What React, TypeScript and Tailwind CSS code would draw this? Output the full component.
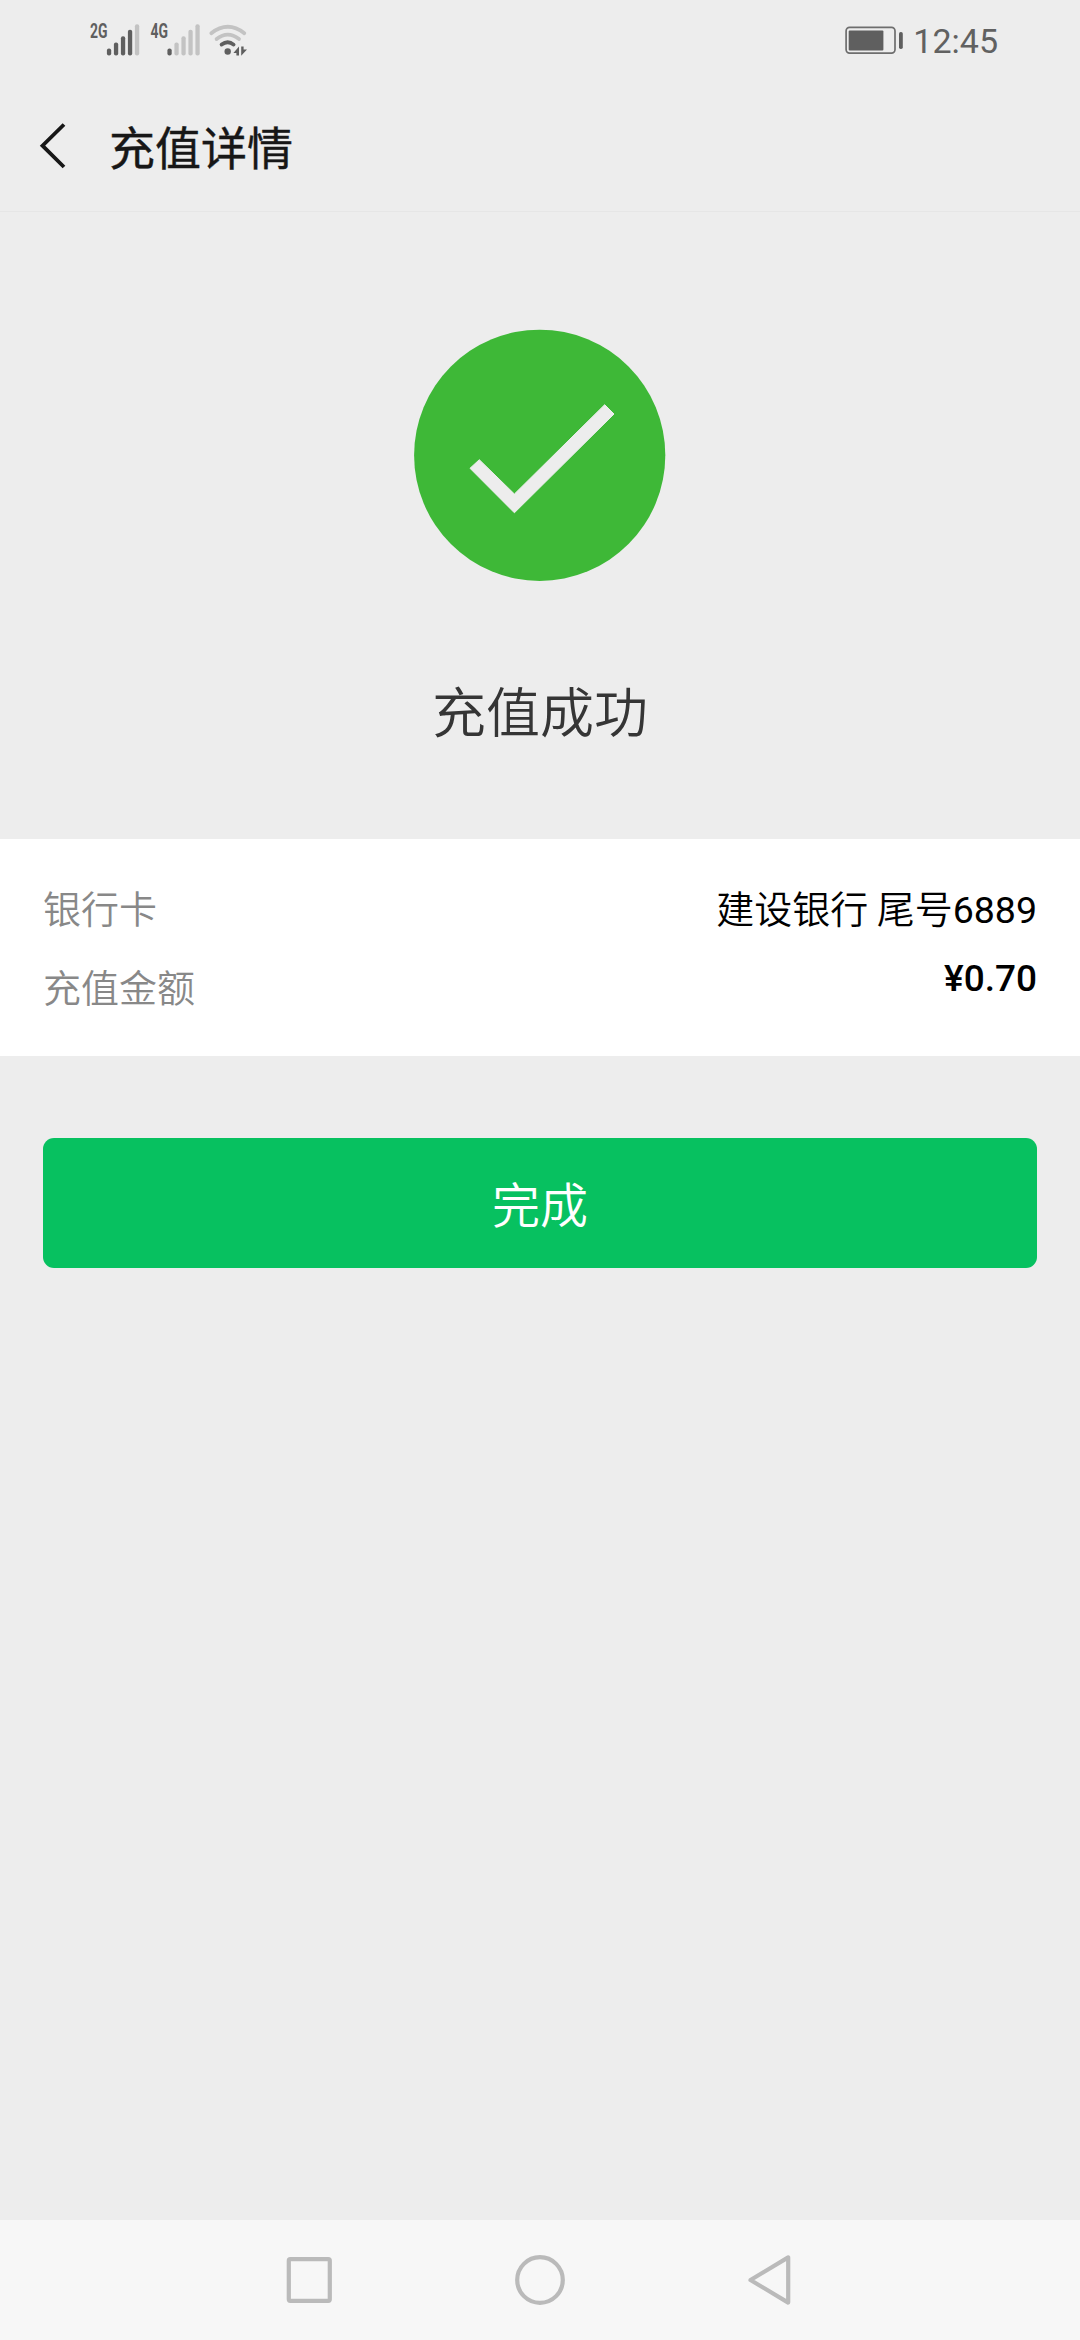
import React from 'react';

const SIGNAL_TOPS = [48.5, 42.5, 36.2, 29.7, 24.2];

interface SignalProps {
  label: string;
  x: number;
  active: number;
}

const Signal: React.FC<SignalProps> = ({ label, x, active }) => (
  <g>
    <text
      x={x}
      y={38.4}
      textLength={17.5}
      lengthAdjust="spacingAndGlyphs"
      className="fill-[#5f5f5f] font-['Roboto'] text-[19.5px] font-bold"
    >
      {label}
    </text>
    {SIGNAL_TOPS.map((top, i) => (
      <rect
        key={top}
        x={x + 16.9 + i * 7}
        y={top}
        width={4.3}
        height={55.4 - top}
        rx={2}
        className={i < active ? 'fill-[#5f5f5f]' : 'fill-[#c3c3c3]'}
      />
    ))}
  </g>
);

const StatusBar: React.FC = () => (
  <div className="flex h-[81px] items-start justify-between pl-20 pr-[82px]">
    <svg className="h-[81px] w-[180px]" viewBox="80 0 180 81" fill="none">
      <Signal label="2G" x={90} active={4} />
      <Signal label="4G" x={150.5} active={1} />
      <g strokeWidth={3.8} strokeLinecap="round">
        <path d="M211.3 33.2Q227.8 20.3 244.3 33.2" stroke="#c3c3c3" />
        <path d="M216.6 39Q227.8 30.3 239 39" stroke="#c3c3c3" />
        <path d="M221.6 44.6Q227.8 39.8 233.6 44.6" stroke="#5f5f5f" />
      </g>
      <circle cx={227.7} cy={51.5} r={3.2} fill="#5f5f5f" />
      <path d="M239 46.4V55.6H236.4V53H233.4ZM241.2 46.4H243.6V49.4H247L241.2 55.8Z" fill="#5f5f5f" />
    </svg>
    <div className="flex h-[81px] items-start">
      <svg className="mt-[26px] h-7 w-[58px]" viewBox="844 26 58 28" fill="none">
        <rect x={845.1} y={27.4} width={48.9} height={25.7} rx={3.5} stroke="#6e6e6e" strokeWidth={1.7} />
        <rect x={847.7} y={30.4} width={34.7} height={20} rx={1} fill="#5f5f5f" />
        <rect x={898} y={32} width={3.8} height={17} rx={1.7} fill="#5f5f5f" />
      </svg>
      <span className="ml-[10px] mt-[21px] font-['Roboto'] text-[34px] leading-10 text-[#616161]">12:45</span>
    </div>
  </div>
);

const Header: React.FC = () => (
  <header className="flex h-[131px] items-start border-b border-[#e6e6e6]">
    <svg className="ml-[38px] mt-10 h-12 w-7" viewBox="38 121 28 48" fill="none">
      <path d="M64 124.5L42.5 145.7L64 167" stroke="#171717" strokeWidth={3.8} />
    </svg>
    <h1 className="ml-[43px] mt-[34px] text-[46px] font-normal leading-[60px] text-[#171717] [-webkit-text-stroke:0.4px_#171717]">
      充值详情
    </h1>
  </header>
);

const Result: React.FC = () => (
  <section className="flex h-[627px] flex-col items-center">
    <svg className="mt-[117px] h-[253px] w-[252px]" viewBox="414 329 252 253" fill="none">
      <circle cx={539.7} cy={455.3} r={125.6} fill="#3eb837" />
      <path
        d="M479.3 459.7L514.4 494L604.7 404.7L614 414L514.4 512.8L470 468.3Z"
        fill="#ededed"
        stroke="#ededed"
        strokeLinejoin="round"
      />
    </svg>
    <p className="mt-[92px] text-[54px] font-[350] leading-[72px] text-[#353535]">充值成功</p>
  </section>
);

const Details: React.FC = () => (
  <dl className="flex h-[217px] items-start justify-between bg-white px-[43px] text-[38px]">
    <div className="mt-[43px] flex flex-col font-[350] text-[#888888]">
      <dt className="h-[79px] leading-[50px]">银行卡</dt>
      <dt className="leading-[50px]">充值金额</dt>
    </div>
    <div className="mt-[43px] flex flex-col items-end text-black">
      <dd className="h-[72px] font-[350] leading-[50px]">
        建设银行 尾号<span className="font-['Roboto'] text-[37.5px] font-normal">6889</span>
      </dd>
      <dd className="font-['Roboto'] text-[37px] font-medium leading-[50px]">¥0.70</dd>
    </div>
  </dl>
);

const NavBar: React.FC = () => (
  <nav className="flex h-[120px] items-center justify-center gap-[180px] bg-[#f7f7f7]">
    <svg className="h-[52px] w-[52px]" viewBox="-26 -26 52 52" fill="none" stroke="#bababa" strokeWidth={4.2}>
      <rect x={-19.2} y={-20.8} width={41} height={41.6} rx={1.5} />
    </svg>
    <svg className="h-[52px] w-[52px]" viewBox="-26 -26 52 52" fill="none" stroke="#bababa" strokeWidth={4.2}>
      <circle r={22.8} />
    </svg>
    <svg className="h-[52px] w-[52px]" viewBox="-26 -26 52 52" fill="none" stroke="#bababa" strokeWidth={4.2} strokeLinejoin="round">
      <path d="M16.2 -22.6V22.6L-21.5 0Z" />
    </svg>
  </nav>
);

const App: React.FC = () => {
  return (
    <div className="flex h-[2340px] w-[1080px] flex-col bg-[#ededed] font-['Noto_Sans_CJK_SC',sans-serif]">
      <StatusBar />
      <Header />
      <Result />
      <Details />
      <main className="flex-1 px-[43px] pt-[82px]">
        <button className="flex h-[130px] w-full items-center justify-center rounded-[11px] bg-[#07c160] pb-0.5 text-[48px] font-[350] leading-[64px] text-white">
          完成
        </button>
      </main>
      <NavBar />
    </div>
  );
};

export default App;
